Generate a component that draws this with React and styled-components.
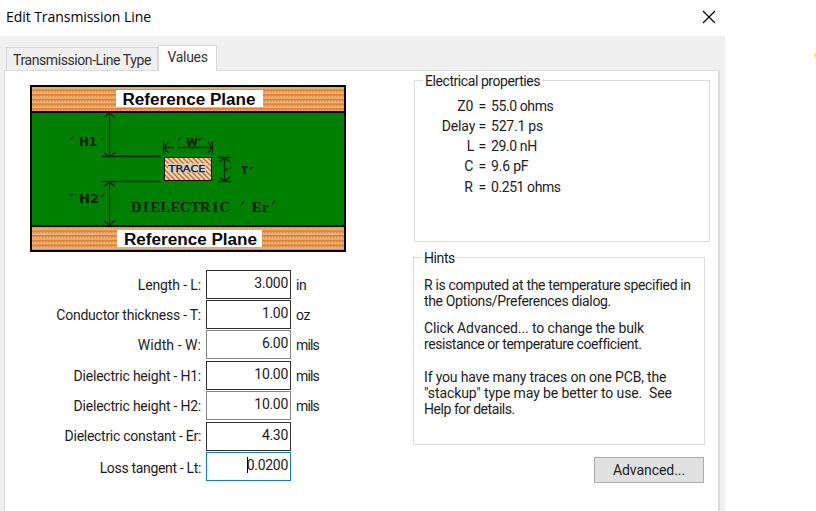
import React from "react";
import styled, { createGlobalStyle } from "styled-components";

const Global = createGlobalStyle`
  * { box-sizing: border-box; }
  body { margin: 0; background: #fff; color: #1c1c1c; font: 14px/16px Roboto, "Liberation Sans", sans-serif; overflow: hidden; }
`;
const Page = styled.div`
  display: flex; justify-content: space-between; width: 816px; height: 511px; overflow: hidden;
`;
const Dialog = styled.div`
  display: flex; flex-direction: column; width: 725px; height: 511px; background: #f0f0f0;
`;
const TitleBar = styled.header`
  display: flex; align-items: center; justify-content: space-between; flex: none;
  height: 36px; padding: 0 9px 2px 6px; background: #fff; color: #000;
  font: 14px/18px "Open Sans", sans-serif; letter-spacing: -0.06px;
`;
const CloseButton = styled.button`
  display: flex; padding: 0; border: 0; background: none;
`;
const Tabs = styled.nav`
  display: flex; align-items: flex-end; height: 35px; padding-left: 6px; margin-bottom: -1px; flex: none;
`;
const Tab = styled.button`
  display: flex; justify-content: center; flex: none; color: #333; font: inherit; letter-spacing: ${p => p.$track}px;
  width: ${p => p.$width}px; height: ${p => (p.$active ? 26 : 23)}px; padding: ${p => (p.$active ? 3 : 4)}px 0 0;
  background: ${p => (p.$active ? "#fff" : "#f0f0f0")};
  border: 1px solid #d9d9d9; border-bottom: 0; margin-bottom: ${p => (p.$active ? 0 : 1)}px;
  position: relative; white-space: nowrap;
`;
const Panel = styled.main`
  display: flex; flex: 1; width: 716px; margin-left: 4px; background: #fff;
  border: 1px solid #dcdcdc; border-width: 1px 2px 0 1px;
`;
const LeftColumn = styled.section`
  display: flex; flex-direction: column; width: 408px; padding: 14px 0 0 25px;
`;
const Form = styled.form`
  display: grid; grid-template-rows: 30px 30px 31px 30px 31px 30px 30px; margin-top: 18px;
`;
const Field = styled.label`
  display: grid; grid-template-columns: 171px 85px 1fr; column-gap: 5px; align-items: start;
`;
const Caption = styled.span`
  padding-top: ${p => p.$top}px; text-align: right; letter-spacing: ${p => p.$track}px; white-space: nowrap;
`;
const Entry = styled.span`
  display: flex; justify-content: flex-end; height: 29px; padding: 4px 2px 0 0; background: #fff;
  border: 1px solid ${p => p.$border}; letter-spacing: -0.3px;
`;
const Caret = styled.i`
  width: 1px; height: 16px; margin-right: -1px; background: #000;
`;
const Unit = styled.span`
  padding: 7px 0 0; letter-spacing: ${p => p.$track}px;
`;
const RightColumn = styled.section`
  display: flex; flex-direction: column; align-items: flex-start; padding-top: 2px;
`;
const Group = styled.section`
  display: flex; flex-direction: column; flex: none; width: ${p => p.$width}px; height: ${p => p.$height}px;
  margin: ${p => p.$margin}; border: 1px solid #dcdcdc; border-top: 0;
`;
const Legend = styled.h2`
  display: flex; align-items: flex-start; gap: 2px; flex: none; margin: -7px 0 0; height: 16px;
  font: inherit; letter-spacing: ${p => p.$track}px; white-space: nowrap;
  &::before, &::after { content: ""; height: 1px; margin-top: 7px; background: #dcdcdc; }
  &::before { width: 8px; }
  &::after { flex: 1; }
`;
const Properties = styled.dl`
  display: grid; grid-template-columns: 71px 1fr; grid-template-rows: 20px 20px 20px 21px 20px;
  column-gap: 5px; margin: 9px 0 0;
`;
const Name = styled.dt`
  text-align: right; letter-spacing: -0.15px; word-spacing: ${p => p.$gap}px; white-space: nowrap;
`;
const Value = styled.dd`
  margin: 0; letter-spacing: ${p => p.$track}px; white-space: nowrap;
`;
const Hint = styled.p`
  margin: ${p => p.$top}px 0 0 10px; line-height: 16.4px;
`;
const Line = styled.span`
  display: block; white-space: pre; letter-spacing: ${p => p.$track}px;
`;
const Button = styled.button`
  width: 110px; height: 26px; margin: 12px 0 0 181px; padding: 0; border: 1px solid #adadad;
  background: #e1e1e1; color: #222; font: inherit; letter-spacing: -0.05px;
`;
const Spark = styled.i`
  width: 2px; height: 5px; margin-top: 53px; background: #ffee55; border-radius: 2px 0 0 2px;
`;
const Drawing = styled.svg`
  display: block; flex: none;
`;

function TraceDiagram() {
  return (
    <Drawing width="316" height="167" viewBox="30 85 316 167">
      <defs>
        <pattern id="copper" width="3" height="4.7" patternUnits="userSpaceOnUse">
          <rect width="3" height="4.7" fill="#dfb68c" />
          <rect width="3" height="1.7" fill="#ea7d1c" />
          <rect y="1.7" width="1.5" height="1.5" fill="#ea8c3a" />
        </pattern>
        <pattern id="hatch" width="5" height="5" patternUnits="userSpaceOnUse">
          <rect width="5" height="5" fill="#f0dcc0" />
          <path d="M-1 -1L6 6M-1 4L1 6M4 -1L6 1" stroke="#d8671e" strokeWidth="1.5" />
        </pattern>
      </defs>
      <rect x="30" y="85" width="316" height="167" fill="#080800" />
      <rect x="32" y="87" width="312" height="24" fill="url(#copper)" />
      <rect x="32" y="113" width="312" height="112" fill="#008000" />
      <rect x="32" y="227" width="312" height="23" fill="url(#copper)" />
      <rect x="116" y="90" width="147" height="17" fill="#fff" />
      <rect x="117" y="230" width="145" height="17" fill="#fff" />
      <g fontFamily="Liberation Sans, sans-serif" fontWeight="700" fontSize="16" fill="#080808">
        <text x="122.500" y="104.5" textLength="133" lengthAdjust="spacingAndGlyphs">Reference Plane</text>
        <text x="124" y="244.5" textLength="133" lengthAdjust="spacingAndGlyphs">Reference Plane</text>
      </g>
      <g fill="none" stroke="#002400" strokeWidth="1.3">
        <path d="M109.5 113V157M104 117.5L109.5 113L115 117.5M104 152.5L109.5 157L115 152.5M102 156.5H161" />
        <path d="M109.5 182V225M104 186.5L109.5 182L115 186.5M104 220.5L109.5 225L115 220.5M101 181.5H161" />
        <path d="M163.5 141V154M168 142L164 147.5L168 153M164 147.5H174M178 147.5H212M212.5 141V154M208 142L212 147.5L208 153" />
        <path d="M218 157.5H231M218 181.5H231M224.5 158V181M219 162L224.5 158L230 162M219 177L224.5 181L230 177M224 169.5H228" />
        <path d="M70 139.500L73 137.500M101 140L104 137.500M70 196L73 194M101 197L104 194M178 140.500L181 138M198 140.500L201 138M229 169L232 167M250 169L253 167M241 205L244 201M272 205L275 201" />
      </g>
      <rect x="164.500" y="157.500" width="47" height="23" fill="url(#hatch)" stroke="#180800" />
      <rect x="168" y="163.500" width="38" height="9" fill="#d8cfc5" />
      <g fontFamily="DejaVu Sans, sans-serif" fontSize="10" fill="#001c00">
        <text x="168.500" y="171.500" fontSize="9.500" textLength="37" lengthAdjust="spacingAndGlyphs" fill="#08081c" stroke="#08081c" strokeWidth=".25">TRACE</text>
        <g fontWeight="700" fontSize="11.500">
          <text x="79" y="146" textLength="18" lengthAdjust="spacingAndGlyphs">H1</text>
          <text x="79" y="202.500" textLength="20" lengthAdjust="spacingAndGlyphs">H2</text>
          <text x="186" y="145.500" fontSize="10.500" textLength="12" lengthAdjust="spacingAndGlyphs">W</text>
          <text x="241" y="174" fontSize="10">T</text>
        </g>
      </g>
      <g fontFamily="Liberation Serif, serif" fontWeight="700" fontSize="14.500" fill="#001c00">
        <text x="131 143 150.500 160.500 170.500 180 190.500 200 212.500 219.500" y="211.500">DIELECTRIC</text>
        <text x="251.500 262" y="211.500" fontSize="15.500">Er</text>
      </g>
    </Drawing>
  );
}

const fields = [
  { name: "Length - L:", value: "3.000", unit: "in", track: -0.12, top: 7, border: "#303030" },
  { name: "Conductor thickness - T:", value: "1.00", unit: "oz", track: -0.24, top: 7, border: "#303030" },
  { name: "Width - W:", value: "6.00", unit: "mils", track: 0.05, top: 7, border: "#858585" },
  { name: "Dielectric height - H1:", value: "10.00", unit: "mils", track: -0.22, top: 7, border: "#303030" },
  { name: "Dielectric height - H2:", value: "10.00", unit: "mils", track: -0.22, top: 7, border: "#858585" },
  { name: "Dielectric constant - Er:", value: "4.30", unit: "", track: -0.28, top: 6, border: "#303030" },
  { name: "Loss tangent - Lt:", value: "0.0200", unit: "", track: -0.33, top: 8, border: "#1878cc", focused: true },
];
const properties = [
  { name: "Z0 =", value: "55.0 ohms", track: -0.4, gap: 2 },
  { name: "Delay =", value: "527.1 ps", track: -0.22, gap: 0 },
  { name: "L =", value: "29.0 nH", track: -0.38, gap: 1 },
  { name: "C =", value: "9.6 pF", track: -0.18, gap: 2 },
  { name: "R =", value: "0.251 ohms", track: -0.42, gap: 2.5 },
];
const hints = [
  { top: 11, lines: [["R is computed at the temperature specified in", -0.35], ["the Options/Preferences dialog.", -0.34]] },
  { top: 10, lines: [["Click Advanced... to change the bulk", -0.12], ["resistance or temperature coefficient.", -0.43]] },
  { top: 16, lines: [["If you have many traces on one PCB, the", -0.17], ["\"stackup\" type may be better to use.  See", -0.1], ["Help for details.", -0.45]] },
];

export default function App() {
  return (
    <Page>
      <Global />
      <Dialog>
        <TitleBar>
          Edit Transmission Line
          <CloseButton aria-label="Close">
            <svg width="14" height="14" viewBox="0 0 14 14">
              <path d="M1 1L13 13M13 1L1 13" stroke="#000" strokeWidth="1.15" />
            </svg>
          </CloseButton>
        </TitleBar>
        <Tabs>
          <Tab $width={152} $track={-0.42}>Transmission-Line Type</Tab>
          <Tab $width={59} $track={-0.3} $active>Values</Tab>
        </Tabs>
        <Panel>
          <LeftColumn>
            <TraceDiagram />
            <Form>
              {fields.map(f => (
                <Field key={f.name}>
                  <Caption $track={f.track} $top={f.top}>{f.name}</Caption>
                  <Entry $border={f.border}>{f.focused && <Caret />}{f.value}</Entry>
                  <Unit $track={f.unit === "mils" ? -0.9 : -0.3}>{f.unit}</Unit>
                </Field>
              ))}
            </Form>
          </LeftColumn>
          <RightColumn>
            <Group $width={296} $height={162} $margin="7px 0 0 1px">
              <Legend $track={-0.43}>Electrical properties</Legend>
              <Properties>
                {properties.map(p => (
                  <React.Fragment key={p.name}>
                    <Name $gap={p.gap}>{p.name}</Name>
                    <Value $track={p.track}>{p.value}</Value>
                  </React.Fragment>
                ))}
              </Properties>
            </Group>
            <Group $width={292} $height={188} $margin="15px 0 0 0">
              <Legend $track={-0.4}>Hints</Legend>
              {hints.map(h => (
                <Hint key={h.top} $top={h.top}>
                  {h.lines.map(([text, track]) => <Line key={text} $track={track}>{text}</Line>)}
                </Hint>
              ))}
            </Group>
            <Button>Advanced...</Button>
          </RightColumn>
        </Panel>
      </Dialog>
      <Spark />
    </Page>
  );
}
